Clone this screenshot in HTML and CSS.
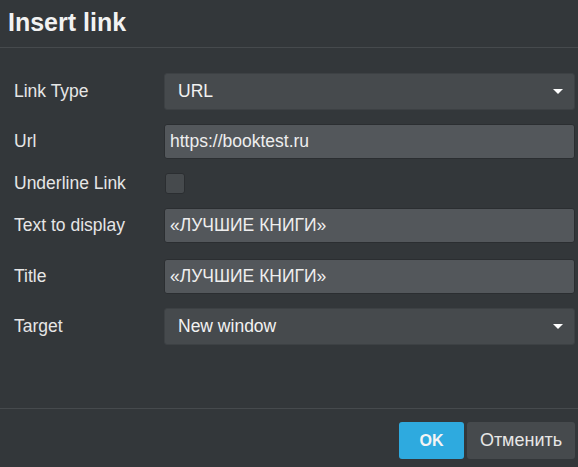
FILE: index.html
```html
<!DOCTYPE html>
<html>
<head>
<meta charset="utf-8">
<link rel="stylesheet" href="styles.css">
</head>
<body>
<div class="dialog">
  <div class="header"><h1 class="title">Insert link</h1></div>
  <div class="body">
    <div class="form">
      <div class="label">Link Type</div>
      <div class="select"><span>URL</span><span class="caret"></span></div>
      <div class="label">Url</div>
      <div class="input">https://booktest.ru</div>
      <div class="label">Underline Link</div>
      <div class="checkrow"><span class="checkbox"></span></div>
      <div class="label">Text to display</div>
      <div class="input">«ЛУЧШИЕ КНИГИ»</div>
      <div class="label spaced">Title</div>
      <div class="input spaced">«ЛУЧШИЕ КНИГИ»</div>
      <div class="label">Target</div>
      <div class="select"><span>New window</span><span class="caret"></span></div>
    </div>
  </div>
  <div class="footer">
    <button class="btn btn-primary">OK</button>
    <button class="btn btn-secondary">Отменить</button>
  </div>
</div>
</body>
</html>
```
FILE: styles.css
```css
html, body {
  margin: 0;
  padding: 0;
  background: #33373a;
}
body {
  font-family: "Liberation Sans", Arial, sans-serif;
  color: #e8e8e8;
  width: 578px;
  height: 467px;
  overflow: hidden;
}
.dialog {
  display: flex;
  flex-direction: column;
  height: 467px;
}
.header {
  border-bottom: 1px solid #464a4d;
  box-sizing: border-box;
  height: 48px;
  padding-left: 8px;
  display: flex;
  align-items: center;
}
.title {
  margin: 0;
  font-size: 25px;
  font-weight: bold;
  color: #f2f2f2;
  margin-top: -2px;
}
.body {
  flex: 1;
  padding: 25px 3px 0 14px;
}
.form {
  display: grid;
  grid-template-columns: 150px 1fr;
  row-gap: 14px;
  align-items: center;
}
.spaced {
  margin-top: 2px;
}
.label {
  font-size: 17.5px;
  color: #e6e6e6;
}
.select {
  height: 37px;
  box-sizing: border-box;
  background: #464a4d;
  border: 1px solid #3d4144;
  border-radius: 3px;
  display: flex;
  align-items: center;
  justify-content: space-between;
  padding: 0 11px 0 13px;
  font-size: 17.5px;
  color: #f2f2f2;
}
.caret {
  width: 0;
  height: 0;
  border-left: 5px solid transparent;
  border-right: 5px solid transparent;
  border-top: 5px solid #ffffff;
}
.input {
  height: 35px;
  box-sizing: border-box;
  background: #53575b;
  border: 1px solid #2b2e31;
  border-radius: 3px;
  display: flex;
  align-items: center;
  padding: 0 6px 0 5px;
  font-size: 17.5px;
  color: #eeeeee;
}
.checkrow {
  height: 21px;
  display: flex;
  align-items: center;
  padding-left: 1px;
}
.checkbox {
  width: 20px;
  height: 21px;
  box-sizing: border-box;
  background: #464a4d;
  border: 1px solid #2b2e31;
  border-radius: 3px;
}
.footer {
  border-top: 1px solid #464a4d;
  height: 59px;
  box-sizing: border-box;
  display: flex;
  justify-content: flex-end;
  align-items: flex-start;
  gap: 3px;
  padding: 13px 3px 0 0;
}
.btn {
  height: 37px;
  border: none;
  border-radius: 3px;
  font-family: "Liberation Sans", Arial, sans-serif;
  font-size: 18px;
  padding: 0;
  cursor: pointer;
}
.btn-primary {
  width: 65px;
  background: #2eaadf;
  color: #f4f4f4;
  font-weight: bold;
  font-size: 16px;
}
.btn-secondary {
  width: 108px;
  background: #464a4d;
  color: #e6e6e6;
}
```
